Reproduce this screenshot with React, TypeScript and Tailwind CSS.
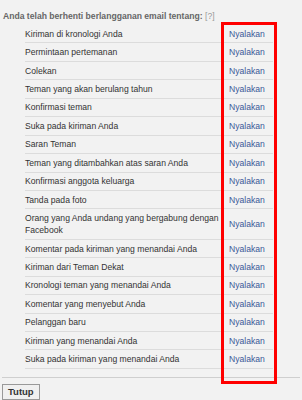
import React from "react";

const items: string[] = [
  "Kiriman di kronologi Anda",
  "Permintaan pertemanan",
  "Colekan",
  "Teman yang akan berulang tahun",
  "Konfirmasi teman",
  "Suka pada kiriman Anda",
  "Saran Teman",
  "Teman yang ditambahkan atas saran Anda",
  "Konfirmasi anggota keluarga",
  "Tanda pada foto",
  "Orang yang Anda undang yang bergabung dengan Facebook",
  "Komentar pada kiriman yang menandai Anda",
  "Kiriman dari Teman Dekat",
  "Kronologi teman yang menandai Anda",
  "Komentar yang menyebut Anda",
  "Pelanggan baru",
  "Kiriman yang menandai Anda",
  "Suka pada kiriman yang menandai Anda",
];

function Row({ label }: { label: string }) {
  return (
    <li className="flex items-center border-b border-[#dcdcdc] py-[2.72px]">
      <span className="w-[204px] pr-2 text-[#333333] leading-[12px]">{label}</span>
      <a href="#" className="text-[#3b5998] leading-[12px]">
        Nyalakan
      </a>
    </li>
  );
}

export default function App() {
  return (
    <div className="relative w-[302px] h-[400px] overflow-hidden bg-[#f2f2f2] font-['Tahoma','Liberation_Sans',sans-serif] text-[8.6px]">
      <div className="pt-[10px] pl-[3px] leading-[12px]">
        <span className="font-bold text-[#666666]">Anda telah berhenti berlangganan email tentang:</span>{" "}
        <span className="text-[#9a9a9a]">[?]</span>
      </div>
      <ul className="ml-[25px] mr-[29px] mt-[3px]">
        {items.map((t) => (
          <Row key={t} label={t} />
        ))}
      </ul>
      <div className="mt-[8px] mx-[2px] border-t border-[#cfcfcf]" />
      <div className="pt-[6px] pl-[2px]">
        <button className="h-[16px] px-[5px] border border-[#999999] bg-[#f0f0f0] font-bold text-[9.5px] text-[#333333] leading-[12px]">
          Tutup
        </button>
      </div>
      {/* red annotation box */}
      <div className="absolute left-[221px] top-[22px] w-[56px] h-[362px] border-[3px] border-[#ff0000] pointer-events-none" />
    </div>
  );
}
